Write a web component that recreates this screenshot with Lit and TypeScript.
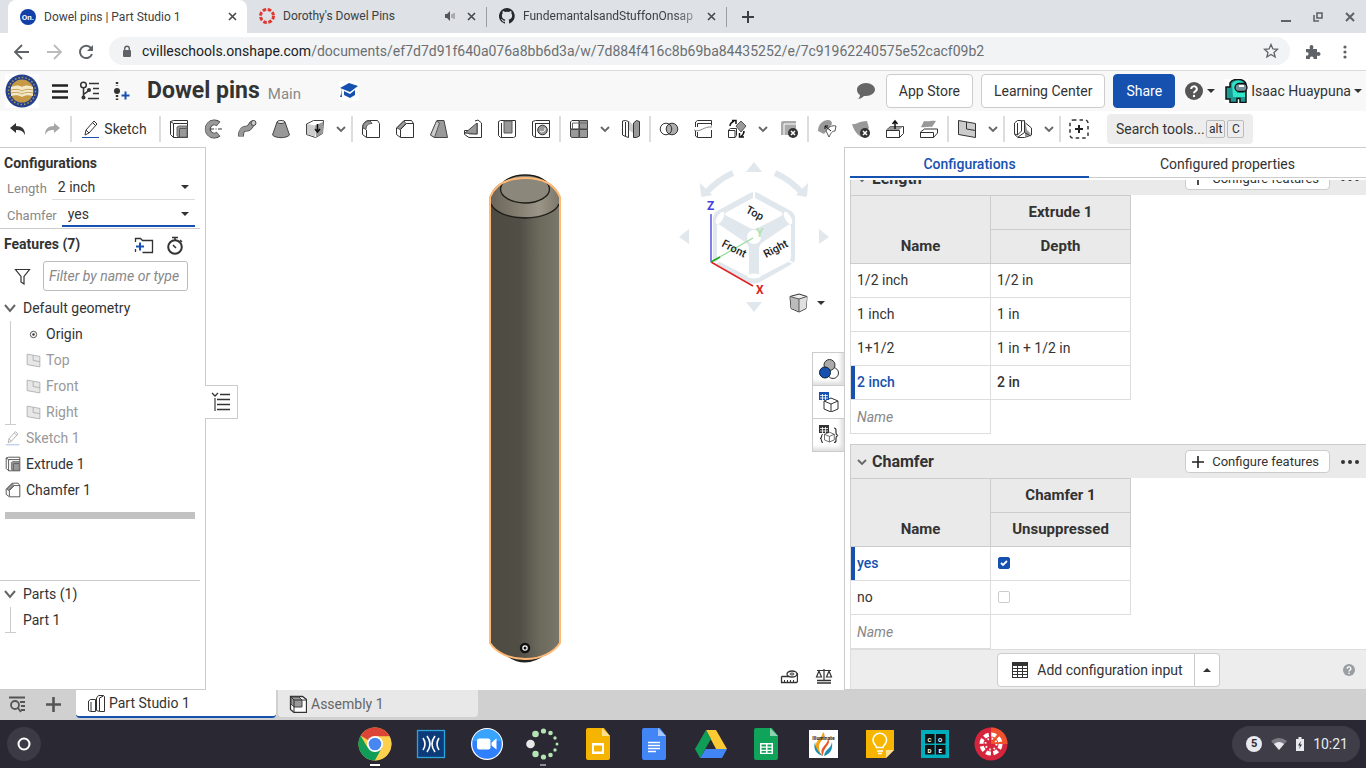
import { LitElement, html, css, svg, TemplateResult, SVGTemplateResult } from "lit";
import { customElement, state } from "lit/decorators.js";
import { classMap } from "lit/directives/class-map.js";

const icon = (art: SVGTemplateResult, w = 20, h = w, box = `0 0 ${w} ${h}`) =>
  html`<svg width=${w} height=${h} viewBox=${box} fill="none" aria-hidden="true">${art}</svg>`;

const K = "#333";
const G = "#999";

const art = {
  undo: svg`<path d="M2 9l6-5v3c6 0 9 3 9 9-2-4-4-5-9-5v3z" fill="#333"/>`,
  redo: svg`<path d="M18 9l-6-5v3c-6 0-9 3-9 9 2-4 4-5 9-5v3z" fill="#a6a6a6"/>`,
  pencil: svg`<path d="M4 16l1-5L13 2l3 3-8 9zM5 11l3 3M12 4l3 3" stroke=${K}/><path d="M1 18.500h17" stroke="#1651b0"/>`,
  extrude: svg`<path d="M1.500 2.500l3-1h14v3M1.500 2.500v13l3 3h14v-14h-14v14M1.500 2.500l3 2" stroke=${K}/><path d="M8 8l2-1h8v11h-8l-2-1z" fill=${G} stroke="#666"/><path d="M10.500 10v8M10.500 9.500h7" stroke="#555"/>`,
  revolve: svg`<path d="M15.500 5A6.500 6.500 0 1 0 15.500 15" stroke="#444" stroke-width="6"/><path d="M15 4.800A6.500 6.500 0 1 0 15 15.200" stroke=${G} stroke-width="4.500"/><path d="M7 10h12" stroke=${K} stroke-dasharray="4 1.500 1 1.500"/>`,
  sweep: svg`<path d="M4 17.500c0-7 2-8 6-8s3-5 7-5.500" stroke="#444" stroke-width="6"/><path d="M4 17c0-6.500 2-7.500 6-7.500s3-5 6.500-5.500" stroke=${G} stroke-width="4.500"/><ellipse cx="16.500" cy="4" rx="2.500" ry="2.500" fill="#ccc" stroke="#444"/>`,
  loft: svg`<path d="M6 3l-4.500 13c3 3.500 14 3.500 17 0L14 3z" fill=${G} stroke="#444"/><ellipse cx="10" cy="3" rx="4" ry="1.500" fill="#eee" stroke="#444"/>`,
  thicken: svg`<path d="M1.500 5l7-3.500h10l-1 13-7 4-9-3z" fill="#fff" stroke="#444"/><path d="M2 5l8 1.500v11L2 15z" fill="#ccc"/><path d="M10 6.500L18 3v11l-7 4z" fill=${G}/><path d="M12.500 5v7M10 10l2.500 3 2.500-3" stroke="#111" stroke-width="1.500"/>`,
  fillet: svg`<path d="M1.500 9c0-5 3-7.500 7-7.500h8l2 3v14h-13l-4-3z" stroke=${K}/><path d="M2 9c0-5 3-7 7-7l2 2.500c-4 0-6 2-6 6z" fill=${G} stroke="#555"/><path d="M5.500 18V11" stroke=${K}/>`,
  chamfer: svg`<path d="M1.500 9L9 1.500h7.500l2 3v14h-13l-4-3z" stroke=${K}/><path d="M2 9l7-7 2 2.500-6 6z" fill=${G} stroke="#555"/><path d="M5.500 18v-7.500l6-6h7" stroke=${K}/>`,
  draft: svg`<path d="M1.500 16L8 1.500h7l3.500 17h-13z" fill=${G} stroke="#444"/><path d="M1.500 16L7.500 2l3 2-5 14.500z" fill="#ccc" stroke="#555"/>`,
  rib: svg`<path d="M12 2l3-1 3.500 3v14.500H6l-4.500-3v-4h4" stroke=${K}/><path d="M2 14L14 4v11z" fill=${G} stroke="#444"/><path d="M14.500 4v11H6" stroke="#666"/>`,
  shell: svg`<path d="M1.500 2.500l2-1h15v16l-2 1h-13l-2-2z" stroke=${K}/><path d="M4.500 4v14" stroke=${K}/><path d="M7 2h8v12H7z" fill=${G} stroke="#555"/>`,
  hole: svg`<path d="M1.500 2.500l3-1h14v17h-14l-3-2zM4.500 4v14M4.500 4.500h14" stroke=${K}/><circle cx="11.500" cy="11" r="4.800" fill=${G} stroke="#333"/><path d="M9 12a3 3 0 0 0 5-3" stroke="#fff"/>`,
  pattern: svg`<path d="M1.500 3l1.500-1.500h7V10H1.500z" fill="#fff" stroke=${K}/><path d="M10.500 1.500h8V10h-8zM1.500 10.500H10v8H3l-1.500-1zM10.500 10.500h8v8h-8z" fill=${G} stroke="#444"/><path d="M3.500 4h15M3.500 4v6" stroke="#666"/>`,
  mirror: svg`<path d="M1.500 2l3-.5 3 1v16l-3-1-3-1.500z" stroke=${K}/><path d="M4.500 3v14.500" stroke=${K}/><path d="M8 2l4 4v8l-4-3z" fill="#ccc"/><path d="M12.500 4l3-2.500 3 1V17l-3 1.500h-3z" fill=${G} stroke=${K}/>`,
  boolean: svg`<circle cx="7" cy="10" r="5.800" stroke=${K}/><circle cx="13" cy="10" r="5.800" fill=${G} fill-opacity=".8" stroke=${K}/><path d="M10 5a6 6 0 0 1 0 10" stroke=${K}/>`,
  split: svg`<path d="M2.500 3l2-1.500h14v5M2.500 3v5M2.500 12v5l2 1.500h14V11M4.500 4.500h14M4.500 4.500V8M4.500 13v5" stroke=${K}/><path d="M1 11c6 3 10-4 18-3" stroke="#888"/>`,
  transform: svg`<path d="M1.500 11l2-1.500h6v7l-1.500 2H1.500zM1.500 11.500H8v7" stroke=${K}/><path d="M14 2l5 5-5 6-5-6z" fill=${G} stroke="#555"/><path d="M3 7c0-3 2-4 4-5M5 1.500h4V5M17 12c0 3-1 4-3 5.500M12.500 14v4H17" stroke="#111" stroke-width="1.500"/>`,
  deletePart: svg`<path d="M2 3l2-1h13v13l-2 1H2z" fill="#aaa"/><path d="M5 5v11M5 5h12" stroke="#fff"/><circle cx="14" cy="14" r="5" fill="#333"/><path d="M12 12l4 4M16 12l-4 4" stroke="#fff" stroke-width="1.500"/>`,
  modifyFillet: svg`<path d="M1 12C1 5 6 1 11 1c3 0 4 2 4 4L7 15z" fill=${G}/><path d="M9 12c2-4 6-6 10-5l-1 5c-3 0-4 2-6 6z" fill="#fff" stroke="#555"/><path d="M8 7l6 5M8 10V7h3" stroke="#111"/>`,
  deleteFace: svg`<path d="M1 5c4 1 7-3 15-3l2 7-8 9C6 15 3 12 1 5z" fill=${G}/><circle cx="14" cy="14" r="5" fill="#333"/><path d="M12 12l4 4M16 12l-4 4" stroke="#fff" stroke-width="1.500"/>`,
  moveFace: svg`<path d="M1.500 11l4-3.500h13v7l-4 4h-13z" stroke=${K}/><path d="M2 11l4-3.500h12L14 11z" fill=${G}/><path d="M1.500 11.500h13v7" stroke=${K}/><path d="M10 10V2M7.500 5L10 2l2.500 3" stroke="#111" stroke-width="1.500"/>`,
  replaceFace: svg`<path d="M5 2c5 1 8-1 12 0l-4 6c-4-1-7 1-11 0z" fill=${G}/><path d="M1.500 13l4-3h13v4l-4 4.500h-13zM1.500 13.500h13v5" stroke=${K}/>`,
  plane: svg`<path d="M1.500 1.500l17 3v14l-17-3z" fill="#ccc" stroke=${K}/><path d="M9.500 3v7l9 1.500" stroke=${K}/>`,
  frame: svg`<path d="M1.500 4l3-2.500h4V12l-4 4-3-1zM4.500 4v12M8.500 2l3-.5M5 18l6.500-4.500M12.500 4l6 5v7l-7 2.500H5l-3.500-3" stroke=${K}/><path d="M12 2l2 9 4 4-6 3V4z" fill=${G}/><path d="M11.500 1.500v12l6 3.500" stroke=${K}/>`,
  addTool: svg`<rect x="1" y="1" width="18" height="18" rx="3" stroke=${K} stroke-width="1.500" stroke-dasharray="3.500 3"/><path d="M10 6v8M6 10h8" stroke="#222" stroke-width="2"/>`,
  chevron: svg`<path d="M2 4l4 4 4-4" stroke="#666" stroke-width="1.800"/>`,
  caret: svg`<path d="M0 0h8L4 4z" fill=${K}/>`,
  caretUp: svg`<path d="M0 4h8L4 0z" fill=${K}/>`,
  close: svg`<path d="M1 1l7 7M8 1L1 8" stroke="#45484c" stroke-width="1.600"/>`,
  help: svg`<circle cx="9" cy="9" r="9" fill="currentColor"/><path d="M6.200 7a2.800 2.600 0 1 1 4 2.300c-1 .6-1.200 1-1.200 2" stroke="#fff" stroke-width="2"/><circle cx="9" cy="14" r="1.200" fill="#fff"/>`,
  table: svg`<path d="M0 0h16v16H0z" fill="#333"/><path d="M1 4h4v2H1zM6 4h4v2H6zM11 4h4v2h-4zM1 7h4v2H1zM6 7h4v2H6zM11 7h4v2h-4zM1 10h4v2H1zM6 10h4v2H6zM11 10h4v2h-4zM1 13h4v2H1zM6 13h4v2H6zM11 13h4v2h-4z" fill="#fff"/>`,
  cube: svg`<path d="M1 3.500L10 1l8 2.500-1 12L10 19l-8-3.500z" fill="#eee" stroke=${K}/><path d="M1.500 4L10 6v12.500L2 15z" fill="#bbb"/><path d="M10 6l8-2-1 11-7 3.500z" fill="#e0e0e0"/><path d="M1 3.500L10 6l8-2.500M10 6v13" stroke="#555"/>`,
};

type Tool = { label: string; art: SVGTemplateResult; menu?: boolean };
const t = (label: string, a: SVGTemplateResult, menu = false): Tool => ({ label, art: a, menu });
const toolGroups: Tool[][] = [
  [t("Extrude", art.extrude), t("Revolve", art.revolve), t("Sweep", art.sweep), t("Loft", art.loft), t("Thicken", art.thicken, true)],
  [t("Fillet", art.fillet), t("Chamfer", art.chamfer), t("Draft", art.draft), t("Rib", art.rib), t("Shell", art.shell), t("Hole", art.hole)],
  [t("Linear pattern", art.pattern, true), t("Mirror", art.mirror)],
  [t("Boolean", art.boolean), t("Split", art.split), t("Transform", art.transform, true), t("Delete part", art.deletePart)],
  [t("Modify fillet", art.modifyFillet), t("Delete face", art.deleteFace), t("Move face", art.moveFace), t("Replace face", art.replaceFace)],
  [t("Plane", art.plane, true)],
  [t("Frame", art.frame, true)],
  [t("Add custom features", art.addTool)],
];

const fileFold = (body: string, fold: string, inner: SVGTemplateResult) =>
  svg`<path d="M6 1h16l6 8v22a2 2 0 0 1-2 2H6a2 2 0 0 1-2-2V3a2 2 0 0 1 2-2z" fill=${body}/><path d="M20 1l8 8h-8z" fill=${fold}/>${inner}`;

const shelfApps: { label: string; art: SVGTemplateResult; run?: string }[] = [
  { label: "Chrome", run: "on", art: svg`<circle cx="17" cy="17" r="16.500" fill="#fdd04d"/><path d="M17 17L2.700 8.700A16.500 16.500 0 0 1 31.600 9.500H17z" fill="#dc4437"/><path d="M17 17l-4 7 4 9.500A16.500 16.500 0 0 1 2.700 8.700l7 12z" fill="#0f9d58"/><path d="M17 33.500l7-13-7 4.500-7-4.500-2-2 2 8z" fill="#0f9d58"/><path d="M17 33.500a16.500 16.500 0 0 0 14.600-24H17l7 12z" fill="#fdd04d"/><circle cx="17" cy="17" r="8" fill="#fff"/><circle cx="17" cy="17" r="6.300" fill="#4886f0"/>` },
  { label: "Read and Write", art: svg`<rect x="3.500" y="3.500" width="27" height="27" fill="#0d3b7a" stroke="#2aa5dc" stroke-width="1.300"/><path d="M9 11q4 6 0 12M13 9q6 8 0 16M25 11q-4 6 0 12M21 9q-6 8 0 16" stroke="#fff" stroke-width="1.600"/>` },
  { label: "Zoom", art: svg`<circle cx="17" cy="17" r="16" fill="#fff"/><circle cx="17" cy="17" r="14.800" fill="#2f80ff"/><path d="M2.500 14a14.800 14.800 0 0 1 29 0z" fill="#39a4ff"/><rect x="7" y="11.500" width="13.500" height="11" rx="2.500" fill="#fff"/><path d="M21.500 15.500l5-4v11l-5-4z" fill="#fff"/>` },
  { label: "Loader", run: "idle", art: svg`<circle cx="4.500" cy="17" r="4.300" fill="#e8e8e8"/><g fill="#b4e3b4"><circle cx="9.500" cy="7" r="3.300"/><circle cx="17.500" cy="4" r="2.600"/><circle cx="24.500" cy="6" r="2.300"/><circle cx="29" cy="11" r="1.700"/><circle cx="31" cy="17" r="1.500"/><circle cx="29" cy="23" r="1.700"/><circle cx="24.500" cy="28" r="2.300"/><circle cx="17.500" cy="30" r="2.600"/><circle cx="9.500" cy="27" r="3.200"/></g>` },
  { label: "Slides", art: fileFold("#f4b400", "#fbe08d", svg`<path d="M10 16h12v11H10zM12 18.500v6h8v-6z" fill="#fff" fill-rule="evenodd"/>`) },
  { label: "Docs", art: fileFold("#4285f4", "#a8c7fa", svg`<path d="M10 15.500h12M10 18.500h12M10 21.500h12M10 24.500h8" stroke="#fff" stroke-width="1.500"/>`) },
  { label: "Drive", art: svg`<path d="M12 3h10l11 19H22z" fill="#fbc934"/><path d="M12 3l5 9L6 31 1 22z" fill="#109d58"/><path d="M11.500 22H33l-5 9H6z" fill="#4285f4"/>` },
  { label: "Sheets", art: fileFold("#10a35a", "#8fd3b0", svg`<path d="M10 16h13v11H10z" fill="#fff"/><path d="M11.500 17.500h4.500v2h-4.500zM17.500 17.500H21.500v2h-4zM11.500 20.800h4.500v2h-4.500zM17.500 20.800h4v2h-4zM11.500 24h4.500v1.800h-4.500zM17.500 24h4v1.800h-4z" fill="#10a35a"/>`) },
  { label: "Illuminate", art: svg`<path d="M3 3h29v28H3z" fill="#fff"/><path d="M17 5c5 6-4 8-4 15 0 4 2 8 4 9-6-2-8-7-7-12 1-4 6-6 7-12z" fill="#f6a11a"/><path d="M22 12c4 5-5 8-5 17-5-8 4-10 5-17z" fill="#e8562a"/><path d="M9 15c-2 7 1 12 8 14-4-4-7-6-8-14zM26 15c1 8-2 12-8 14 1-7 7-7 8-14z" fill="#1c8fb0"/><text x="17.500" y="12.500" text-anchor="middle" class="micro">Illuminate</text>` },
  { label: "Keep", art: svg`<path d="M4 3h28v20l-8 8H4z" fill="#f7b500"/><path d="M32 23h-8v8z" fill="#fde293"/><path d="M14.500 20.500c0-2-3.500-3.500-3.500-7.500a6.800 6.800 0 0 1 13.600 0c0 4-3.600 5.500-3.600 7.500zM15 24h6M16 26.500h4" stroke="#fff" stroke-width="1.600"/>` },
  { label: "Code.org", art: svg`<path d="M3 3h28v28H3z" fill="#00adbc"/><path d="M7 7h9.500v9.500H7zM18 7h9.500v9.500H18zM7 18h9.500v9.500H7zM18 18h9.500v9.500H18z" fill="#111"/><g class="code"><text x="9.500" y="14.500">C</text><text x="20" y="14.500">O</text><text x="9.500" y="25.500">D</text><text x="20.500" y="25.500">E</text></g>` },
  { label: "Canvas", art: svg`<circle cx="17" cy="17" r="16.500" fill="#d6243c"/><path d="M17 .5A16.500 16.500 0 0 1 33.500 17H17z" fill="#f0512d"/><circle cx="17" cy="17" r="9.500" stroke="#fff" stroke-width="4" stroke-dasharray="4.960 2.500"/><circle cx="17" cy="17" r="5.500" stroke="#fff" stroke-width="2" stroke-dasharray="1.500 2.820"/>` },
];

@customElement("app-root")
export class AppRoot extends LitElement {
  @state() private lengthValue = "2 inch";
  @state() private chamferValue = "yes";

  static styles = css`
    :host {
      display: grid;
      grid-template-rows: 33px 38px 40px 36px minmax(0, 1fr) 30px 48px;
      height: 100vh;
      overflow: hidden;
      background: #fff;
      color: #333;
      font: 14px/20px Roboto, "Liberation Sans", sans-serif;
    }
    * { box-sizing: border-box; }
    svg { display: block; flex: none; }
    button, select, input { font: inherit; color: inherit; margin: 0; }
    button { display: flex; align-items: center; justify-content: center; border: 0; padding: 0; background: none; }
    a { color: inherit; text-decoration: none; }

    .strip { display: flex; align-items: stretch; background: #dee1e6; padding-left: 8px; color: #3c4043; }
    .tab { display: flex; align-items: center; flex: 0 1 239px; min-width: 0; padding: 0 10px 0 12px; gap: 8px; font-size: 12px; line-height: 32px; height: 32px; }
    .tab span { flex: 1; white-space: nowrap; overflow: hidden; }
    .tab.active { background: #fff; border-radius: 8px 8px 0 0; height: 33px; }
    .tab.fade span { mask-image: linear-gradient(90deg, #000 85%, rgba(0, 0, 0, .3)); }
    .divider { width: 1px; height: 20px; background: #9a9da1; align-self: center; }
    .newtab { width: 42px; }
    .winctl { display: flex; align-items: center; gap: 22px; padding-right: 11px; margin-left: auto; }

    .nav { display: flex; align-items: center; border-bottom: 1px solid #dcdcdc; padding: 0 12px 0 13px; gap: 14px; }
    .nav button { width: 18px; height: 18px; }
    .omni { flex: 1; min-width: 0; display: flex; align-items: center; gap: 10px; height: 28px; border-radius: 14px; background: #f1f3f4; padding: 0 10px 0 13px; margin: 0 0 2px; color: #6b6f73; }
    .omni .url { flex: 1; min-width: 0; white-space: nowrap; overflow: hidden; }
    .omni b { font-weight: 400; color: #202124; }

    .head { display: flex; align-items: center; background: #f8f8f8; padding: 0 4px 0 5px; }
    .head .menu { margin-left: 13px; width: 16px; }
    .head .branch { margin-left: 11px; }
    .head .version { margin-left: 12px; }
    h1 { margin: 0 8px 0 16px; font-size: 23px; line-height: 32px; font-weight: 700; white-space: nowrap; }
    .main-ws { font-size: 15px; color: #888; margin: 6px 38px 0 0; }
    .hat { background: #fff; border-radius: 3px; }
    .head-right { display: flex; align-items: center; gap: 8px; margin-left: auto; white-space: nowrap; }
    .btn { height: 34px; padding: 0 12px; border: 1px solid #ccc; border-radius: 4px; background: #fff; }
    .btn.primary { background: #1651b0; border-color: #1651b0; color: #fff; }
    .head-right .chat { margin-right: 2px; }
    .help { gap: 4px; color: #555; margin: 0 2px; }
    .user { gap: 3px; }

    .tools { display: flex; align-items: center; padding-left: 1px; }
    .tool { width: 34px; height: 32px; flex: none; }
    .drop { width: 18px; height: 32px; flex: none; }
    .sep { width: 2px; height: 26px; background: #ddd; margin: 0 1px; flex: none; }
    .sketch { width: 85px; gap: 3px; padding-right: 3px; }
    .search { display: flex; align-items: center; gap: 2px; margin-left: 11px; height: 30px; padding: 0 9px; background: #ededed; border-radius: 4px; white-space: nowrap; }
    .search input { width: 88px; border: 0; padding: 0; background: none; outline: 0; }
    .search input::placeholder { color: #333; opacity: 1; }
    kbd { font: 12px/16px Roboto, "Liberation Sans", sans-serif; border: 1px solid #bbb; border-radius: 2px; padding: 0 2px; min-width: 17px; text-align: center; }

    .work { display: flex; min-height: 0; }
    .side { flex: 0 0 206px; min-width: 0; display: flex; flex-direction: column; border: solid #ccc; border-width: 1px 1px 1px 0; padding-right: 5px; }
    h2 { margin: 0; font-size: 14px; line-height: 20px; font-weight: 700; }
    .side .configs { padding: 5px 5px 1px 4px; border-bottom: 1px solid #ccc; }
    .pick { display: flex; align-items: flex-end; gap: 5px; height: 27px; padding-left: 3px; }
    .pick label { font-size: 13px; line-height: 22px; color: #888; }
    .pick .box { position: relative; flex: 1; min-width: 0; height: 26px; border-bottom: 1px solid #ddd; }
    .pick.focus .box { border-bottom: 2px solid #1651b0; }
    .pick select { appearance: none; width: 100%; height: 26px; border: 0; background: none; padding: 0 20px 0 6px; outline: 0; }
    .pick .box svg { position: absolute; right: 6px; top: 11px; pointer-events: none; }
    .feat-head { display: flex; align-items: center; height: 32px; padding: 0 16px 0 4px; gap: 12px; }
    .feat-head h2 { flex: 1; padding-bottom: 2px; }
    .filter { display: flex; align-items: center; gap: 12px; padding: 0 12px 0 14px; }
    .filter input { flex: 1; min-width: 0; height: 30px; border: 1px solid #bbb; border-radius: 3px; padding: 0 5px; font-style: italic; outline: 0; }
    .filter input::placeholder { color: #888; opacity: 1; }
    .tree { list-style: none; margin: 0; padding: 4px 0 0; }
    .tree.flat { padding: 0; }
    .tree li, .node { display: flex; align-items: center; height: 26px; gap: 5px; padding-left: 5px; color: #333; }
    .node { gap: 7px; padding-left: 4px; }
    .kids { position: relative; list-style: none; margin: 0; padding: 0; }
    .kids::before { content: ""; position: absolute; left: 5px; top: 0; bottom: 0; width: 11px; background: linear-gradient(#ccc, #ccc) 5px 0 / 1px 100% no-repeat, linear-gradient(#ccc, #ccc) 0 100% / 100% 1px no-repeat; }
    .kids li, .tree .kids li { padding-left: 26px; }
    .tree .dim { color: #999; }
    .tree .dim svg { opacity: .45; }
    .rollback { height: 7px; margin: 9px 0 0 5px; background: #c2c2c2; width: 190px; }
    .parts { margin-top: auto; border-top: 1px solid #ccc; height: 109px; }
    .parts .kids li { padding-left: 23px; }

    .stage { position: relative; flex: 1; min-width: 0; display: grid; place-items: center; }
    .listflag { position: absolute; left: -1px; top: 238px; width: 33px; height: 34px; background: #fff; border: 1px solid #ccc; border-left: 0; }
    .viewcube { position: absolute; right: 10px; top: 12px; }
    .viewmenu { position: absolute; right: 19px; top: 146px; gap: 8px; }
    .flags { position: absolute; right: 0; top: 205px; width: 32px; border: 1px solid #ccc; border-right: 0; }
    .flags button { width: 31px; height: 32px; box-shadow: inset -3px -3px 4px #ddd; }
    .flags button + button { border-top: 1px solid #ccc; height: 33px; }
    .flags .on { box-shadow: none; background: #fff; }
    .measure { position: absolute; right: 11px; bottom: 6px; display: flex; gap: 17px; }
    .ax { font: 700 12px Roboto, sans-serif; }
    .face { font: 500 11px Roboto, sans-serif; }
    .micro { font: 700 5px Roboto, sans-serif; fill: #222; }
    .code { font: 700 6px Roboto, sans-serif; fill: #fff; }

    .panel { flex: 0 0 522px; display: flex; flex-direction: column; border: solid #ccc; border-width: 1px 0 1px 1px; padding-left: 5px; min-width: 0; }
    .ptabs { display: grid; grid-template-columns: 239px 1fr; height: 32px; border-bottom: 2px solid #fff; }
    .ptabs button { padding-top: 3px; border-bottom: 1px solid #ccc; }
    .ptabs .on { color: #1651b0; font-weight: 500; border-bottom: 2px solid #1651b0; }
    .scroll { flex: 1; min-height: 0; overflow-y: auto; scrollbar-width: none; }
    .sect { display: flex; align-items: center; height: 34px; background: #eaeaea; border: 1px solid #ccc; border-width: 1px 0 0 1px; padding: 0 6px 0 5px; gap: 4px; }
    .sect h2 { flex: 1; font-size: 16px; }
    .sect .btn { height: 23px; gap: 8px; padding: 0 10px 0 6px; font-size: 13px; }
    .sect .more { width: 20px; height: 20px; margin-left: 6px; }
    table { border-collapse: collapse; table-layout: fixed; width: 281px; margin-bottom: 10px; }
    table.last { margin-bottom: 0; }
    th { height: 34px; padding: 0 0 2px; background: #eaeaea; border: 1px solid #ccc; font-size: 15px; font-weight: 700; }
    th.name { vertical-align: bottom; padding-bottom: 7px; }
    td { height: 34px; padding: 0 6px 2px; border: 1px solid #ddd; }
    td + td { border-left-color: #ccc; }
    td.new { padding-bottom: 0; color: #888; font-style: italic; }
    td.none { border: 0; }
    .cur td { font-weight: 500; }
    .cur td:first-child { color: #1651b0; box-shadow: inset 4px 0 #1651b0; }
    td input { appearance: none; display: block; width: 12px; height: 12px; margin-left: 1px; border: 1px solid #ccc; border-radius: 2px; background: #fff; }
    td input:checked { border-color: #1651b0; background: #1651b0 url("data:image/svg+xml,%3Csvg xmlns='http://www.w3.org/2000/svg' viewBox='0 0 10 10'%3E%3Cpath d='M2 5l2 2 4-4' fill='none' stroke='white' stroke-width='1.8'/%3E%3C/svg%3E"); }
    .pfoot { display: grid; grid-template-columns: 1fr auto 1fr; align-items: center; height: 40px; background: #ededed; border: solid #ddd; border-width: 1px 0 0 1px; }
    .split { display: flex; grid-column: 2; }
    .split .btn:first-child { border-radius: 4px 0 0 4px; gap: 9px; padding: 0 11px 0 14px; }
    .split .btn:last-child { border-radius: 0 4px 4px 0; border-left: 0; width: 25px; padding: 0; }
    .pfoot .info { justify-self: end; margin-right: 11px; color: #9a9ea3; }

    .doctabs { display: flex; align-items: flex-start; background: #d0d0d0; }
    .doctabs .tool { height: 28px; width: 35px; }
    .doctabs .add { width: 41px; padding-right: 4px; }
    .doc { display: flex; align-items: center; gap: 4px; width: 200px; height: 27px; padding-left: 11px; border-radius: 0 0 4px 4px; margin-right: 2px; background: #e8e8e8; color: #666; }
    .doc.on { height: 28px; background: #fff; color: #333; border-bottom: 2px solid #1651b0; }

    .shelf { display: grid; grid-template-columns: 1fr auto 1fr; align-items: center; background: #2a2832; }
    .launch { margin-left: 7px; justify-self: start; width: 34px; height: 34px; border-radius: 17px; background: #3c3a45; }
    .apps { display: flex; height: 48px; }
    .app { width: 56px; flex-direction: column; padding-top: 7px; justify-content: flex-start; }
    .app i { width: 10px; height: 2px; margin-top: 3px; }
    .app .on { background: #fff; }
    .app .idle { background: #8e8d94; width: 6px; }
    .status { justify-self: end; display: flex; align-items: center; gap: 9px; height: 36px; margin-right: 6px; padding: 0 12px 0 14px; border-radius: 18px; background: #3f3d48; color: #e8eaed; }
    .count { width: 16px; height: 16px; border-radius: 8px; background: #e8eaed; color: #2a2832; font: 700 11px/16px Roboto, sans-serif; text-align: center; }
  `;

  firstUpdated() {
    const box = this.renderRoot.querySelector<HTMLElement>(".scroll");
    if (box) box.scrollTop = box.scrollHeight;
  }

  private btn(label: string, cls: string, body: unknown) {
    return html`<button class=${cls} aria-label=${label}>${body}</button>`;
  }

  private tab(fav: SVGTemplateResult, title: string, cls: string, extra: unknown = "") {
    return html`<div class="tab ${cls}">${icon(fav, 16)}<span>${title}</span>${extra}
      ${this.btn("Close tab", "", icon(art.close, 9))}</div>`;
  }

  private strip() {
    return html`<div class="strip">
      ${this.tab(svg`<circle cx="8" cy="8" r="8" fill="#1040a8"/><text x="8" y="11" text-anchor="middle" font-size="8" font-weight="700" fill="#fff">On.</text>`, "Dowel pins | Part Studio 1", "active")}
      ${this.tab(svg`<circle cx="8" cy="8" r="6.500" stroke="#e2372c" stroke-width="3" stroke-dasharray="3.500 1.600"/>`, "Dorothy's Dowel Pins", "",
        icon(svg`<path d="M0 4h2l3-3v10L2 8H0z" fill="#555"/><path d="M7 4v4M9 3v6" stroke="#777"/>`, 14, 12))}
      <div class="divider"></div>
      ${this.tab(svg`<path d="M8 0a8 8 0 0 0-2.500 15.600c.4 0 .5-.2.500-.4v-1.500c-2.200.5-2.700-1-2.700-1-.4-.9-.9-1.200-.9-1.200-.7-.5 0-.5 0-.5.800 0 1.200.8 1.200.8.800 1.300 2 .9 2.400.7 0-.5.300-.9.500-1.100-1.700-.2-3.600-.9-3.600-4 0-.8.300-1.500.8-2.100 0-.3-.4-1 .1-2.200 0 0 .7-.2 2.200.8a7.600 7.600 0 0 1 4 0c1.500-1 2.200-.8 2.200-.8.500 1.200.1 1.900.1 2.200.5.600.8 1.300.8 2.100 0 3.100-1.900 3.800-3.600 4 .3.200.5.700.5 1.500v2.200c0 .2.100.5.500.4A8 8 0 0 0 8 0z" fill="#24292e"/>`, "FundemantalsandStuffonOnsap", "fade")}
      <div class="divider"></div>
      ${this.btn("New tab", "newtab", icon(svg`<path d="M6 0v12M0 6h12" stroke="#3c4043" stroke-width="2"/>`, 12))}
      <div class="winctl">
        ${this.btn("Minimise", "", icon(svg`<path d="M0 9h10" stroke="#5f6368" stroke-width="2"/>`, 10))}
        ${this.btn("Restore", "", icon(svg`<path d="M4 1h5v5H4zM1 3v6h5" stroke="#5f6368" stroke-width="1.600"/>`, 10))}
        ${this.btn("Close", "", icon(svg`<path d="M1 1l8 8M9 1L1 9" stroke="#5f6368" stroke-width="2"/>`, 10))}
      </div>
    </div>`;
  }

  private nav() {
    return html`<div class="nav">
      ${this.btn("Back", "", icon(svg`<path d="M16 9H3M9 2L2 9l7 7" stroke="#5f6368" stroke-width="1.800"/>`, 18))}
      ${this.btn("Forward", "", icon(svg`<path d="M2 9h13M9 2l7 7-7 7" stroke="#bbb" stroke-width="1.800"/>`, 18))}
      ${this.btn("Reload", "", icon(svg`<path d="M14 5a6.200 6.200 0 1 0 1 6" stroke="#5f6368" stroke-width="2"/><path d="M16 2v6h-6z" fill="#5f6368"/>`, 18))}
      <div class="omni">
        ${icon(svg`<rect x="1" y="5" width="8" height="7" rx="1" fill="#5f6368"/><path d="M2.700 5V3.500a2.300 2.300 0 0 1 4.600 0V5" stroke="#5f6368" stroke-width="1.400"/>`, 10, 12)}
        <span class="url"><b>cvilleschools.onshape.com</b>/documents/ef7d7d91f640a076a8bb6d3a/w/7d884f416c8b69ba84435252/e/7c91962240575e52cacf09b2</span>
        ${this.btn("Bookmark", "", icon(svg`<path d="M8 1.500l1.900 4.400 4.600.4-3.500 3.100 1.100 4.600L8 11.500 3.900 14 5 9.400 1.500 6.300l4.600-.4z" stroke="#5f6368" stroke-width="1.300"/>`, 16))}
      </div>
      ${this.btn("Extensions", "", icon(svg`<path d="M1 5h4c-1-2 0-4 1.500-4S9 3 8 5h4v3.500c2-1 3.500 0 3.500 1.500S14 12.500 12 11.500V15H8.500c.5-1.500-.5-2.500-1.800-2.500S4.500 13.500 5 15H1v-3.500c2 .5 2.500-.5 2.500-1.700S2.500 7.800 1 8.500z" fill="#5f6368"/>`, 16))}
      ${this.btn("More", "", icon(svg`<g fill="#5f6368"><circle cx="8" cy="3" r="1.600"/><circle cx="8" cy="8" r="1.600"/><circle cx="8" cy="13" r="1.600"/></g>`, 16))}
    </div>`;
  }

  private head() {
    return html`<header class="head">
      ${icon(svg`<path d="M0 0h34v34H0z" fill="#fff"/><circle cx="17" cy="17" r="16.500" fill="#25408a"/><circle cx="17" cy="17" r="13.500" stroke="#a99a58" stroke-width="1.500" stroke-dasharray="1.500 2"/><circle cx="17" cy="17" r="11.500" fill="#c69a45"/><path d="M6 13c4-2 8-2 11 0 3-2 7-2 11 0v9c-4-1-8-1-11 1-3-2-7-2-11-1z" fill="#f3e9c9"/><path d="M6 16c4-1 8-1 11 1 3-2 7-2 11-1M6 19c4-1 8-1 11 1 3-2 7-2 11-1" stroke="#c9a65a"/>`, 34)}
      ${this.btn("Menu", "menu", icon(svg`<path d="M0 1.500h16M0 7.500h16M0 13.500h16" stroke="#222" stroke-width="2.600"/>`, 16, 15))}
      ${this.btn("Versions", "branch", icon(svg`<circle cx="4.500" cy="4" r="2.800" stroke=${K} stroke-width="1.500"/><path d="M4.500 7v9M4.500 14c0-3 5-1 5-6" stroke=${K} stroke-width="1.500"/><circle cx="4.500" cy="16.500" r="2" fill=${K}/><circle cx="10" cy="9" r="2" fill=${K}/><path d="M10 2.500h10M14 7.500h6M14 12.500h6M9 17.500h11" stroke=${K} stroke-width="1.300"/>`, 22, 20))}
      ${this.btn("Create version", "version", icon(svg`<path d="M4 0v4M4 13v5" stroke=${K} stroke-width="2.400" stroke-dasharray="2 1.500"/><circle cx="4" cy="9" r="3" fill=${K}/><path d="M12.500 9.500v8M8.500 13.500h8" stroke="#1651b0" stroke-width="2"/>`, 18))}
      <h1>Dowel pins</h1><span class="main-ws">Main</span>
      <span class="hat">${icon(svg`<path d="M1 7l9-5 9 3-8 6z" fill="#1651b0"/><path d="M5 10l6 3 5-4v5l-5 3-6-3zM2 7v6l-1 3h2z" fill="#1651b0"/>`, 20)}</span>
      <div class="head-right">
        ${this.btn("Comments", "chat", icon(svg`<path d="M10 1c5 0 9 3 9 6.500S15 14 10 14l-2 0c-2 2-4 3-6 3 1-1 2-2 2-4C2 12 1 10 1 7.500 1 4 5 1 10 1z" fill="#666"/>`, 20, 18))}
        <button class="btn">App Store</button>
        <button class="btn">Learning Center</button>
        <button class="btn primary">Share</button>
        ${this.btn("Help", "help", html`${icon(art.help, 18)}${icon(art.caret, 8, 4)}`)}
        <button class="user">
          ${icon(svg`<path d="M0 0h23v24H0z" fill="#fff"/><path d="M1 8h4V4c3-5 14-5 16 1v18.500h-6v-4h-3v4H5V20H1z" fill="#1a9a92" stroke="#111" stroke-width="1.500"/><path d="M7 5c3-5 11-4 13 1H12v8h8v4H8z" fill="#2ee6c8"/><rect x="10" y="4.500" width="12" height="8" rx="4" fill="#78909c" stroke="#111" stroke-width="1.300"/><path d="M14 7h5" stroke="#fff" stroke-width="2"/>`, 23, 24)}
          Isaac Huaypuna ${icon(art.caret, 8, 4)}
        </button>
      </div>
    </header>`;
  }

  private tools() {
    return html`<div class="tools" role="toolbar">
      ${this.btn("Undo", "tool", icon(art.undo))}
      ${this.btn("Redo", "tool", icon(art.redo))}
      <div class="sep"></div>
      <button class="sketch">${icon(art.pencil)}Sketch</button>
      ${toolGroups.map((g) => html`<div class="sep"></div>
        ${g.map((x) => html`${this.btn(x.label, "tool", icon(x.art))}
          ${x.menu ? this.btn(`${x.label} options`, "drop", icon(art.chevron, 12)) : ""}`)}`)}
      <div class="search">
        <input aria-label="Search tools" placeholder="Search tools..."><kbd>alt</kbd><kbd>C</kbd>
      </div>
    </div>`;
  }

  private pick(id: string, label: string, value: string, options: string[], focus: boolean, set: (v: string) => void) {
    return html`<div class=${classMap({ pick: true, focus })}>
      <label for=${id}>${label}</label>
      <div class="box">
        <select id=${id} @change=${(e: Event) => set((e.target as HTMLSelectElement).value)}>
          ${options.map((o) => html`<option ?selected=${o === value}>${o}</option>`)}
        </select>${icon(art.caret, 8, 4)}
      </div>
    </div>`;
  }

  private side() {
    const small = (a: SVGTemplateResult) => icon(a, 16, 16, "0 0 20 20");
    const fold = icon(svg`<path d="M1 3l5 6 5-6" stroke="#666" stroke-width="2"/>`, 12);
    return html`<aside class="side">
      <div class="configs">
        <h2>Configurations</h2>
        ${this.pick("length", "Length", this.lengthValue, ["1/2 inch", "1 inch", "1+1/2", "2 inch"], false, (v) => (this.lengthValue = v))}
        ${this.pick("chamfer", "Chamfer", this.chamferValue, ["yes", "no"], true, (v) => (this.chamferValue = v))}
      </div>
      <div class="feat-head">
        <h2>Features (7)</h2>
        ${this.btn("Add folder", "", icon(svg`<path d="M1.500 6V2.500h5l2 2h10v12h-10M1.500 13v3" stroke=${K} stroke-width="1.300"/><path d="M6 6.500v8M2 10.500h8" stroke="#1651b0" stroke-width="2"/>`, 20, 18))}
        ${this.btn("Regeneration times", "", icon(svg`<circle cx="9" cy="11" r="6.800" stroke=${K} stroke-width="2"/><path d="M6 1.500h6M9 2v2M14 4l2 2M7 9l3 3" stroke=${K} stroke-width="1.500"/>`, 18, 19))}
      </div>
      <div class="filter">
        ${icon(svg`<path d="M1.500 1.500h14l-5.500 7V16l-3-2V8.500z" stroke=${K} stroke-width="1.200"/>`, 17)}
        <input aria-label="Filter" placeholder="Filter by name or type">
      </div>
      <div class="tree">
        <div class="node">${fold}Default geometry</div>
        <ul class="kids">
          <li>${icon(svg`<circle cx="7.500" cy="7.500" r="3.200" stroke="#555"/><circle cx="7.500" cy="7.500" r="1.200" fill="#333"/>`, 15)}Origin</li>
          ${["Top", "Front", "Right"].map((n) => html`<li class="dim">${icon(art.plane, 15, 15, "0 0 20 20")}${n}</li>`)}
        </ul>
      </div>
      <ul class="tree flat">
        <li class="dim">${small(art.pencil)}Sketch 1</li>
        <li>${small(art.extrude)}Extrude 1</li>
        <li>${small(art.chamfer)}Chamfer 1</li>
      </ul>
      <div class="rollback"></div>
      <div class="parts">
        <div class="node">${fold}Parts (1)</div>
        <ul class="kids"><li class="node">Part 1</li></ul>
      </div>
    </aside>`;
  }

  private pin() {
    const outline = "M2 24v446c6 9 18 16 35 16s29-7 35-16V24C66 10 52 5 37 5S8 10 2 24z";
    return html`<svg width="74" height="492" viewBox="0 0 74 492" fill="none" role="img" aria-label="Dowel pin">
      <defs>
        <linearGradient id="body"><stop offset="0" stop-color="#4d4a42"/><stop offset=".42" stop-color="#514e46"/><stop offset=".7" stop-color="#6b685c"/><stop offset="1" stop-color="#7b786b"/></linearGradient>
        <linearGradient id="bevel"><stop offset="0" stop-color="#696459"/><stop offset=".4" stop-color="#857f72"/><stop offset=".7" stop-color="#9b9587"/><stop offset="1" stop-color="#7c776b"/></linearGradient>
      </defs>
      <path d="M16 481q21 17 42 0z" fill="#222"/>
      <path d=${outline} fill="url(#body)"/>
      <path d="M2 24c0 13 16 20 35 20s35-7 35-20C68 10 54 5 37 5S6 10 2 24z" fill="url(#bevel)"/>
      <path d="M3 31c3 8 17 14 34 14s31-6 34-14" stroke="#1c1c18" stroke-width="1.300"/>
      <ellipse cx="37" cy="16" rx="24.500" ry="14" fill="#8b877a" stroke="#1c1c18" stroke-width="1.300"/>
      <path d=${outline} stroke="#ffb974" stroke-width="2"/>
      <circle cx="37" cy="475" r="4" fill="#fff" stroke="#111" stroke-width="2.500"/><circle cx="37" cy="475" r="1.500" fill="#111"/>
    </svg>`;
  }

  private cube() {
    return html`<svg class="viewcube" width="160" height="160" viewBox="0 0 160 160" fill="none" role="img" aria-label="View cube">
      <g fill="#e0e7ed">
        <path d="M80 3l8 10H72zM80 153l8-10H72zM5 78l10-8v15zM155 78l-10-8v15z"/>
        <path d="M26 25l2 13 10-2zM134 25l-2 13-10-2z"/>
        <path d="M26 24l1 13 11-1zM134 24l-1 13-11-1z"/>
      </g>
      <path d="M31 35Q43 21 59 14M129 35Q117 21 101 14" stroke="#e0e7ed" stroke-width="6"/>
      <path d="M76 34q4-2 8 0l33 18q4 3 4 7v40q0 4-3 6l-32 18q-6 3-12 0l-32-18q-3-2-3-6V59q0-4 4-7z" fill="#e0e7ed"/>
      <path d="M77 40q3-2 6 0l24 13q3 2 0 4L84 69q-4 2-8 0L53 57q-4-2 0-4zM46 66q-3-2-3 2v29q0 4 3 6l25 13q4 2 4-2V90q0-4-4-7zM114 66q3-2 3 2v29q0 4-3 6l-25 13q-4 2-4-2V90q0-4 4-7z" fill="#fff"/>
      <circle cx="80" cy="78" r="7" fill="#fff"/><ellipse cx="80" cy="117" rx="7" ry="2.500" fill="#fff"/>
      <ellipse cx="46" cy="59" rx="3" ry="7" transform="rotate(30 46 59)" fill="#fff"/><ellipse cx="114" cy="59" rx="3" ry="7" transform="rotate(-30 114 59)" fill="#fff"/>
      <path d="M80 31v8M38 106l7-4M122 106l-7-4" stroke="#fff" stroke-width="2"/>
      <path d="M37 55v48" stroke="#5a55e0" stroke-width="1.500"/><path d="M37 103l42 24" stroke="#d22" stroke-width="1.500"/>
      <path d="M37 103l42-24" stroke="#9bdc9b" stroke-width="1.300"/><path d="M37 103l9-5" stroke="#2a2" stroke-width="1.500"/>
      <text class="ax" x="33" y="51" fill="#4440dd">Z</text><text class="ax" x="82" y="135" fill="#d22">X</text><text class="ax" x="82" y="78" fill="#b2e2b2">Y</text>
      <g class="face" fill="#222">
        <text transform="translate(71 53) rotate(28)">Top</text>
        <text transform="translate(47 87) rotate(27)">Front</text>
        <text transform="translate(92 99) rotate(-28)">Right</text>
      </g>
    </svg>`;
  }

  private stage() {
    const grid = (c: string) => svg`<path d="M0 0h10v8H0z" fill=${c}/><path d="M1 3.500h8M1 6h8M3.500 2v6M6.500 2v6" stroke="#fff" stroke-width=".8"/>`;
    const box = svg`<path d="M12 6l7 3v8l-7 3-7-3V9zM5 9l7 3 7-3M12 12v8" stroke="#333"/>`;
    return html`<main class="stage">
      ${this.pin()}
      ${this.btn("Feature list", "listflag", icon(svg`<path d="M9 2.500h10M6 7.500h13M6 12.500h13M6 17.500h13M1 1l3 3 3-3" stroke=${K} stroke-width="1.300"/><path d="M4 6v13" stroke="#888" stroke-width="2"/>`))}
      ${this.cube()}
      ${this.btn("View options", "viewmenu", html`${icon(art.cube)}${icon(art.caret, 8, 4)}`)}
      <div class="flags">
        ${this.btn("Appearance", "", icon(svg`<circle cx="14" cy="14" r="5.500" fill="#fff" stroke=${K}/><circle cx="10.500" cy="6" r="5.500" fill="#aaa" stroke=${K}/><circle cx="6" cy="13.500" r="5.500" fill="#1651b0" stroke="#123"/>`))}
        ${this.btn("Configuration", "on", icon(svg`${box}${grid("#1651b0")}`))}
        ${this.btn("Tables", "", icon(svg`<g transform="translate(2 3) scale(.7)">${box}</g><path d="M4 9.500q-1.500 0-1.500 2t-1.500 2q1.500 0 1.500 2t1.500 2M15 3q2 0 2 2.500v2.500q0 2 2 2.500-2 .5-2 2.500v2.500q0 2-2 2" stroke=${K} stroke-width="1.200"/>${grid("#333")}`))}
      </div>
      <div class="measure">
        ${this.btn("Measure", "", icon(svg`<path d="M1.500 10.500h8M1.500 10.500v6h15l1-1V7" stroke=${K} stroke-width="1.300"/><ellipse cx="12" cy="8" rx="5" ry="3" stroke=${K} stroke-width="1.300"/><ellipse cx="12" cy="8" rx="2" ry="1" stroke=${K}/><path d="M4.500 14v2M7.500 14v2M10.500 14v2M13.500 14v2" stroke=${K}/>`, 18))}
        ${this.btn("Mass properties", "", icon(svg`<path d="M2 4.500h14M9 3v11M4 5l-2.500 6h5zM14 5l-2.500 6h5z" stroke=${K} stroke-width="1.200"/><path d="M2 14.500h14M2 17h14" stroke=${K} stroke-width="1.600"/>`, 18))}
      </div>
    </main>`;
  }

  private section(title: string, feature: string, param: string, rows: TemplateResult[], last: boolean) {
    return html`<div class="sect">
        ${icon(art.chevron, 12)}<h2>${title}</h2>
        <button class="btn">${icon(svg`<path d="M6 0v12M0 6h12" stroke="#222" stroke-width="1.600"/>`, 12)}Configure features</button>
        ${this.btn("More options", "more", icon(svg`<g fill=${K}><circle cx="3" cy="10" r="2"/><circle cx="10" cy="10" r="2"/><circle cx="17" cy="10" r="2"/></g>`))}
      </div>
      <table class=${last ? "last" : ""}>
        <thead><tr><th class="name" rowspan="2">Name</th><th>${feature}</th></tr><tr><th>${param}</th></tr></thead>
        <tbody>${rows}<tr><td class="new">Name</td><td class="none"></td></tr></tbody>
      </table>`;
  }

  private panel() {
    const lengths = [["1/2 inch", "1/2 in"], ["1 inch", "1 in"], ["1+1/2", "1 in + 1/2 in"], ["2 inch", "2 in"]];
    return html`<section class="panel">
      <div class="ptabs"><button class="on">Configurations</button><button>Configured properties</button></div>
      <div class="scroll">
        ${this.section("Length", "Extrude 1", "Depth", lengths.map(([n, v]) =>
          html`<tr class=${classMap({ cur: n === this.lengthValue })}><td>${n}</td><td>${v}</td></tr>`), false)}
        ${this.section("Chamfer", "Chamfer 1", "Unsuppressed", ["yes", "no"].map((n) =>
          html`<tr class=${classMap({ cur: n === this.chamferValue })}><td>${n}</td><td><input type="checkbox" aria-label=${`${n} unsuppressed`} .checked=${n === "yes"}></td></tr>`), true)}
      </div>
      <div class="pfoot">
        <div class="split">
          <button class="btn">${icon(art.table, 16)}Add configuration input</button>
          ${this.btn("More inputs", "btn", icon(art.caretUp, 8, 4))}
        </div>
        ${this.btn("Help", "info", icon(art.help, 12, 12, "0 0 18 18"))}
      </div>
    </section>`;
  }

  private docTabs() {
    return html`<div class="doctabs">
      ${this.btn("Tab manager", "tool", icon(svg`<path d="M0 1.500h16M11 6h5M12 10h4M12 14h4" stroke="#555" stroke-width="1.800"/><circle cx="6" cy="9" r="4" stroke="#555" stroke-width="1.800"/><path d="M9 12l3 4" stroke="#555" stroke-width="1.800"/>`, 17))}
      ${this.btn("Add tab", "tool add", icon(svg`<path d="M7.500 0v15M0 7.500h15" stroke="#555" stroke-width="2.600"/>`, 15))}
      <a class="doc on" href="#studio">${icon(svg`<path d="M1.500 7l2-1.500h5v12h-5l-2-1zM4 8v9M9.500 4l2-2.500h5l1 1v15h-5l-3-1zM12.500 4v13M12.500 4l4-2" stroke=${K}/>`, 18)}Part Studio 1</a>
      <a class="doc" href="#assembly">${icon(svg`<path d="M1.500 1.500h12l4 3v13H5l-3.500-3z" fill="#fff" stroke=${K} stroke-width="1.300"/><path d="M2 2h8l3 3v7H5l-3-3z" fill=${G} stroke="#444"/><path d="M2 2l3 3v12M5 5h12" stroke=${K}/>`, 18)}Assembly 1</a>
    </div>`;
  }

  private shelf() {
    return html`<footer class="shelf">
      ${this.btn("Launcher", "launch", icon(svg`<circle cx="7" cy="7" r="5.500" stroke="#fff" stroke-width="2"/>`, 14))}
      <div class="apps">${shelfApps.map((a) => html`<button class="app" aria-label=${a.label}>${icon(a.art, 34)}<i class=${a.run ?? ""}></i></button>`)}</div>
      <div class="status"><span class="count">5</span>
        ${icon(svg`<path d="M0 4q8-6 16 0l-8 9z" fill="#7c7a83"/><path d="M3 7q5-4 10 0l-5 6z" fill="#e8eaed"/>`, 16, 14)}
        ${icon(svg`<path d="M0 2h2.500V0h3v2H8v12H0z" fill="#e8eaed"/><path d="M5 4L2 8.500h2L3 12l3-4.500H4z" fill="#2a2832"/>`, 8, 14)}
        <span>10:21</span></div>
    </footer>`;
  }

  render() {
    return html`${this.strip()}${this.nav()}${this.head()}${this.tools()}
      <div class="work">${this.side()}${this.stage()}${this.panel()}</div>
      ${this.docTabs()}${this.shelf()}`;
  }
}
